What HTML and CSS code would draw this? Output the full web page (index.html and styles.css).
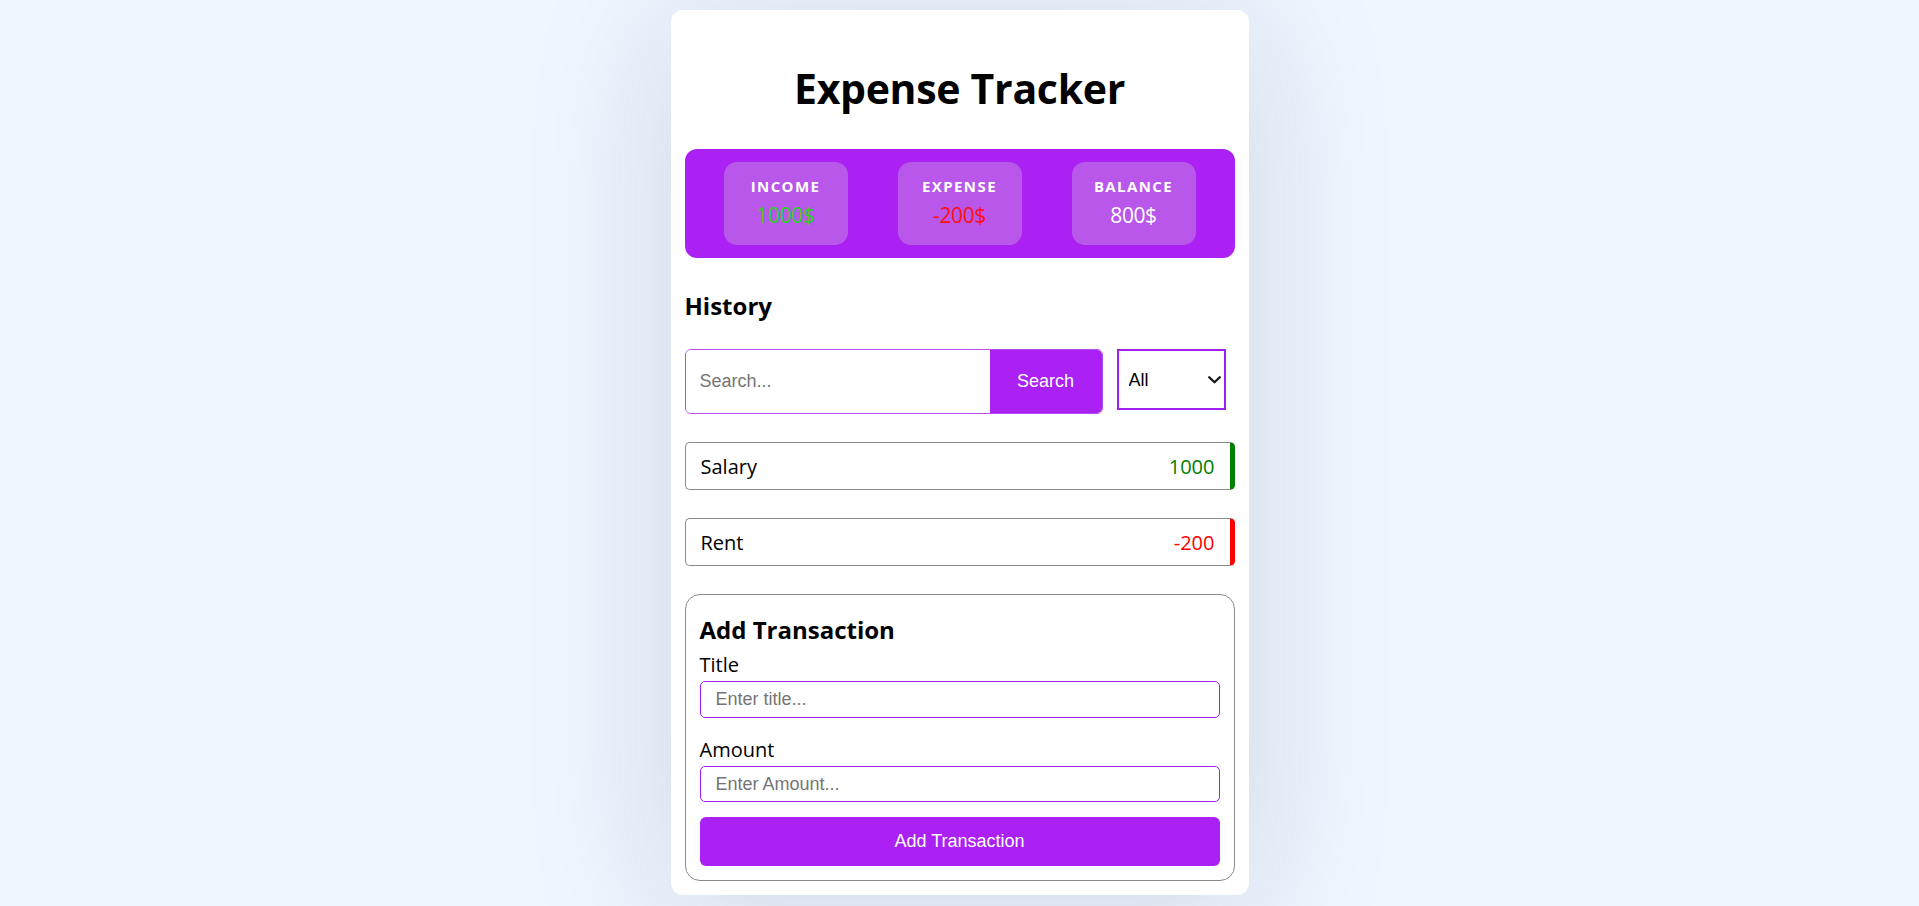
FILE: index.html
```html
<!DOCTYPE html>
<html lang="en">
<head>
<meta charset="utf-8">
<title>Expense Tracker</title>
<link rel="stylesheet" href="styles.css">
</head>
<body>
<main class="card">
  <h1 class="title">Expense Tracker</h1>
  <section class="summary">
    <div class="stat">
      <div class="stat-label">Income</div>
      <div class="stat-value income">1000$</div>
    </div>
    <div class="stat">
      <div class="stat-label">Expense</div>
      <div class="stat-value expense">-200$</div>
    </div>
    <div class="stat">
      <div class="stat-label">Balance</div>
      <div class="stat-value balance">800$</div>
    </div>
  </section>

  <h2 class="section-title">History</h2>
  <div class="search-row">
    <div class="search-box">
      <input class="search-input" type="text" placeholder="Search...">
      <button class="search-btn" type="button">Search</button>
    </div>
    <div class="filter-wrap">
      <select class="filter">
        <option>All</option>
        <option>Income</option>
        <option>Expense</option>
      </select>
      <svg class="chevron" width="13" height="8" viewBox="0 0 13 8" aria-hidden="true">
        <path d="M1.2 1.2 L6.5 6.3 L11.8 1.2" fill="none" stroke="#111" stroke-width="2.2" stroke-linecap="round" stroke-linejoin="round"/>
      </svg>
    </div>
  </div>

  <ul class="tx-list">
    <li class="tx tx-plus"><span class="tx-name">Salary</span><span class="tx-amount plus">1000</span></li>
    <li class="tx tx-minus"><span class="tx-name">Rent</span><span class="tx-amount minus">-200</span></li>
  </ul>

  <form class="add-box">
    <h2 class="add-title">Add Transaction</h2>
    <label class="field-label" for="title">Title</label>
    <input class="field-input" id="title" type="text" placeholder="Enter title...">
    <label class="field-label" for="amount">Amount</label>
    <input class="field-input" id="amount" type="text" placeholder="Enter Amount...">
    <button class="add-btn" type="button">Add Transaction</button>
  </form>
</main>
</body>
</html>
```
FILE: styles.css
```css
* { box-sizing: border-box; }

html, body {
  margin: 0;
  padding: 0;
}

body {
  background: #eef6ff;
  font-family: "Open Sans", "Noto Sans", sans-serif;
  color: #000;
  padding-top: 10px;
  min-height: 906px;
}

.card {
  width: 578px;
  margin: 0 auto;
  background: #fff;
  border-radius: 12px;
  padding: 0 14px 14px;
  box-shadow: 0 14px 150px rgba(20, 40, 80, 0.15);
  display: flow-root;
}

.title {
  font-size: 41px;
  font-weight: 700;
  text-align: center;
  margin: 50px 0 33px;
  line-height: 56px;
  letter-spacing: -0.3px;
}

.summary {
  background: #ab20f2;
  border-radius: 12px;
  padding: 13px 14px;
  display: flex;
  justify-content: space-around;
}

.stat {
  width: 124px;
  height: 83px;
  border-radius: 13px;
  background: rgba(215, 215, 215, 0.3);
  text-align: center;
  padding-top: 14px;
  color: #fff;
}

.stat-label {
  font-size: 15px;
  font-weight: 700;
  letter-spacing: 1.4px;
  text-transform: uppercase;
  line-height: 20px;
  margin-bottom: 5px;
}

.stat-value {
  font-size: 21px;
  line-height: 29px;
  letter-spacing: -0.4px;
}

.income { color: #22d422; }
.expense { color: #ff1010; }
.balance { color: #fff; }

.section-title {
  font-size: 24px;
  font-weight: 700;
  margin: 31px 0 27px;
  line-height: 33px;
}

.search-row {
  display: flex;
  align-items: flex-start;
  gap: 14px;
}

.search-box {
  width: 418px;
  height: 65px;
  display: flex;
  border: 1px solid #b34ef0;
  border-radius: 6px;
  overflow: hidden;
}

.search-input {
  flex: 1;
  min-width: 0;
  border: none;
  outline: none;
  padding: 0 14px;
  font-family: "Liberation Sans", Arial, sans-serif;
  font-size: 18px;
  color: #000;
}

.search-input::placeholder,
.field-input::placeholder {
  color: #757575;
}

.search-btn {
  width: 112px;
  border: none;
  background: #ab20f2;
  color: #fff;
  font-family: "Liberation Sans", Arial, sans-serif;
  font-size: 18px;
  padding: 0;
}

.filter-wrap {
  position: relative;
  width: 109px;
  height: 61px;
}

.filter {
  appearance: none;
  -webkit-appearance: none;
  width: 100%;
  height: 100%;
  border: 2px solid #a020f0;
  border-radius: 0;
  background: #fff;
  font-family: "Liberation Sans", Arial, sans-serif;
  font-size: 18px;
  color: #000;
  padding: 0 24px 0 10px;
  outline: none;
}

.chevron {
  position: absolute;
  right: 5px;
  top: 27px;
  pointer-events: none;
}

.tx-list {
  list-style: none;
  margin: 28px 0 0;
  padding: 0;
  display: flex;
  flex-direction: column;
  gap: 28px;
}

.tx {
  height: 48px;
  display: flex;
  align-items: center;
  justify-content: space-between;
  border: 1px solid #8a8a8a;
  border-radius: 5px;
  padding: 0 15px;
  font-size: 20px;
}

.tx-plus { border-right: 5px solid #008000; }
.tx-minus { border-right: 5px solid #ff0000; }

.plus { color: #008000; }
.minus { color: #ff0000; }

.add-box {
  margin-top: 28px;
  border: 1px solid #8a8a8a;
  border-radius: 15px;
  padding: 18px 14px 14px;
}

.add-title {
  font-size: 24px;
  font-weight: 700;
  line-height: 33px;
  margin: 0 0 5px;
}

.field-label {
  display: block;
  font-size: 20px;
  line-height: 27px;
  margin-bottom: 3px;
}

.field-input {
  display: block;
  width: 100%;
  height: 37px;
  border: 1px solid #a020f0;
  border-radius: 5px;
  padding: 0 15px;
  font-family: "Liberation Sans", Arial, sans-serif;
  font-size: 18px;
  outline: none;
  margin-bottom: 18px;
}

#amount {
  height: 36px;
  margin-bottom: 15px;
}

.add-btn {
  display: block;
  width: 100%;
  height: 49px;
  border: none;
  border-radius: 6px;
  background: #ab20f2;
  color: #fff;
  font-family: "Liberation Sans", Arial, sans-serif;
  font-size: 18px;
}
```
